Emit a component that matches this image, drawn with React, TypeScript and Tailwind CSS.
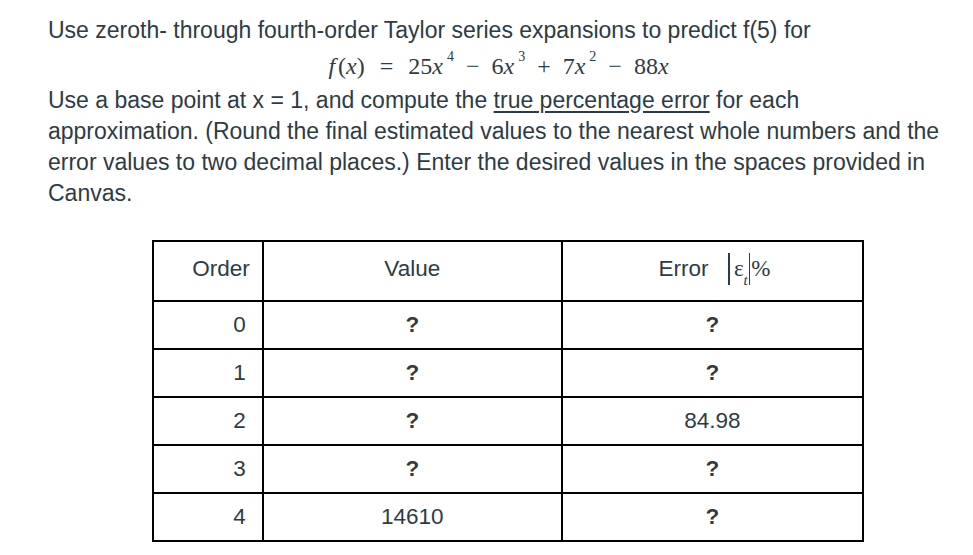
import * as React from 'react'

const rows = [
  { order: '0', value: '?', error: '?' },
  { order: '1', value: '?', error: '?' },
  { order: '2', value: '?', error: '84.98' },
  { order: '3', value: '?', error: '?' },
  { order: '4', value: '14610', error: '?' },
]

function Cell({ text, className }: { text: string; className?: string }) {
  const isQ = text === '?'
  return (
    <td className={`border-2 border-black h-[48px] ${isQ ? 'font-bold' : ''} ${className ?? ''}`}>
      {text}
    </td>
  )
}

function Formula() {
  return (
    <div className="h-[39px] flex items-center justify-center pr-[24px] italic text-[24px] leading-none text-[#2d3b45] font-['Liberation_Serif',serif]">
      <span>f</span>
      <span className="not-italic ml-[3px]">(</span>
      <span>x</span>
      <span className="not-italic">)</span>
      <span className="not-italic mx-[15px]">=</span>
      <span className="not-italic">25</span>
      <span>x</span>
      <sup className="not-italic text-[14px] ml-[4px] -top-[9px]">4</sup>
      <span className="not-italic mx-[12px]">−</span>
      <span className="not-italic">6</span>
      <span>x</span>
      <sup className="not-italic text-[14px] ml-[4px] -top-[9px]">3</sup>
      <span className="not-italic mx-[12px]">+</span>
      <span className="not-italic">7</span>
      <span>x</span>
      <sup className="not-italic text-[14px] ml-[4px] -top-[9px]">2</sup>
      <span className="not-italic mx-[12px]">−</span>
      <span className="not-italic">88</span>
      <span>x</span>
    </div>
  )
}

export default function App() {
  return (
    <div className="w-[973px] h-[555px] bg-white overflow-hidden font-['Liberation_Sans',Arial,sans-serif] text-[#2d3b45]">
      <div className="pt-[15px] pl-[48px] text-[23px] leading-[31px] whitespace-nowrap">
        <p>Use zeroth- through fourth-order Taylor series expansions to predict f(5) for</p>
        <Formula />
        <p>
          Use a base point at x = 1, and compute the{' '}
          <span className="underline underline-offset-[3px]">true percentage error</span> for each
          <br />
          approximation. (Round the final estimated values to the nearest whole numbers and the
          <br />
          error values to two decimal places.) Enter the desired values in the spaces provided in
          <br />
          Canvas.
        </p>
      </div>

      <table className="ml-[152px] mt-[31px] border-collapse border-2 border-black text-[22.5px] w-[712px]">
        <colgroup>
          <col className="w-[110px]" />
          <col className="w-[300px]" />
          <col className="w-[302px]" />
        </colgroup>
        <thead>
          <tr className="h-[60px]">
            <th className="border-2 border-black font-normal text-right pr-[12px] pb-[4px]">Order</th>
            <th className="border-2 border-black font-normal text-center pb-[4px]">Value</th>
            <th className="border-2 border-black font-normal text-center pb-[4px]">
              <span className="inline-flex items-center pl-[4px]">
                Error
                <span className="ml-[20px] inline-flex items-center font-['Liberation_Serif',serif]">
                  <span className="inline-block w-[1.5px] h-[32px] bg-[#2d3b45]" />
                  <span className="ml-[4px] text-[23px]">ε</span>
                  <span className="italic text-[15px] relative top-[11px]">t</span>
                  <span className="ml-[1px] inline-block w-[1.5px] h-[32px] bg-[#2d3b45]" />
                  <span className="ml-[1px] text-[23px]">%</span>
                </span>
              </span>
            </th>
          </tr>
        </thead>
        <tbody>
          {rows.map((r) => (
            <tr key={r.order}>
              <Cell text={r.order} className="text-right pr-[16px]" />
              <Cell text={r.value} className="text-center" />
              <Cell text={r.error} className="text-center" />
            </tr>
          ))}
        </tbody>
      </table>
    </div>
  )
}
